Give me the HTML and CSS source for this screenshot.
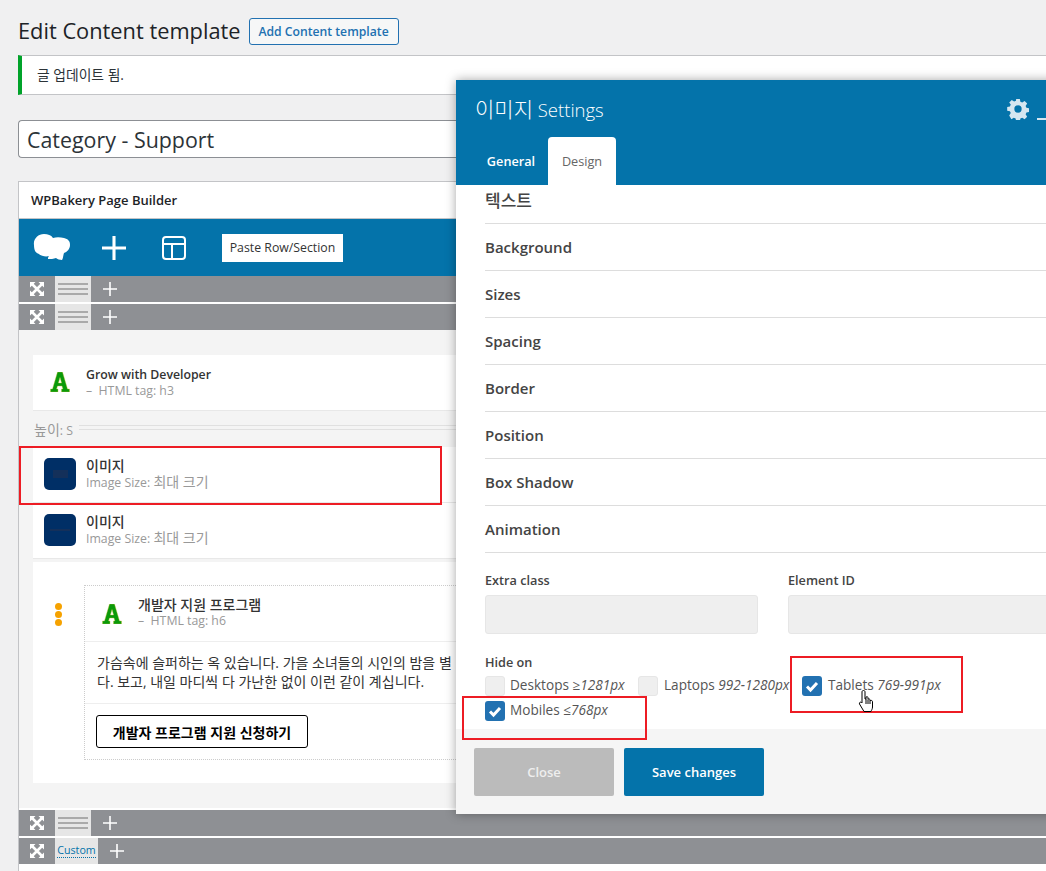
FILE: index.html
```html
<!DOCTYPE html>
<html lang="ko">
<head>
<meta charset="utf-8">
<title>Edit Content template</title>
<link rel="stylesheet" href="styles.css">
</head>
<body>
<svg class="defs" width="0" height="0">
  <symbol id="expand" viewBox="0 0 14 14">
    <path fill="#fff" d="M0 0h5.500L0 5.500zM14 0v5.500L8.500 0zM0 14V8.500L5.500 14zM14 14H8.500L14 8.500z"/>
    <path stroke="#fff" stroke-width="2.600" d="M2 2l10 10M12 2 2 12"/>
  </symbol>
  <symbol id="plus" viewBox="0 0 14 14">
    <path stroke="#fff" stroke-width="1.600" d="M7 0v14M0 7h14"/>
  </symbol>
  <symbol id="letter" viewBox="0 0 20 20">
    <path fill="#0a9a0a" stroke="#c9c23a" stroke-width=".4" d="M7.500 0h5l5 17h2v3h-8v-3h1.400l-.9-3H7.500l-.9 3H8v3H.5v-3h2zM10 5.500 8.400 11h3.200z"/>
  </symbol>
  <symbol id="check" viewBox="0 0 20 20">
    <path fill="none" stroke="#fff" stroke-width="3" d="M5 10.500 8.500 14 15 7"/>
  </symbol>
</svg>

<main class="page">
  <div class="heading">
    <h1 class="title">Edit Content template</h1>
    <a class="add-btn">Add Content template</a>
  </div>
  <div class="notice">글 업데이트 됨.</div>
  <div class="title-input">Category - Support</div>

  <section class="card">
    <h2 class="card-head">WPBakery Page Builder</h2>
    <div class="toolbar">
      <svg class="logo" width="38" height="28" viewBox="0 0 38 28"><path fill="#fff" d="M1 11C0 5 5 0 11 0c4 0 7 1 9 4 3-1 7-1 11 0 4 1 6 3 6 7 0 4-3 7-6 8-1 3-1 6-2 7-2 0-5-1-6-2-2 1-6 1-8 1 0-1 0-2 1-3-3 1-8 0-10-2-3-1-5-3-5-9z"/></svg>
      <svg class="tool-plus" width="24" height="24" viewBox="0 0 14 14"><path stroke="#fff" stroke-width="1.800" d="M7 0v14M0 7h14"/></svg>
      <svg class="tool-layout" width="24" height="24" viewBox="0 0 24 24"><path fill="none" stroke="#fff" stroke-width="2" d="M4 1h16a3 3 0 0 1 3 3v16a3 3 0 0 1-3 3H4a3 3 0 0 1-3-3V4a3 3 0 0 1 3-3zM1 8h22M10 8v15"/></svg>
      <span class="paste">Paste Row/Section</span>
    </div>
    <div class="row-bar">
      <span class="bar-expand"><svg width="14" height="14"><use href="#expand"/></svg></span>
      <span class="bar-handle"></span>
      <svg class="bar-plus" width="14" height="14"><use href="#plus"/></svg>
    </div>
    <div class="row-bar row-bar-gap">
      <span class="bar-expand"><svg width="14" height="14"><use href="#expand"/></svg></span>
      <span class="bar-handle"></span>
      <svg class="bar-plus" width="14" height="14"><use href="#plus"/></svg>
    </div>

    <div class="canvas">
      <div class="el el-head">
        <svg class="el-letter" width="20" height="20"><use href="#letter"/></svg>
        <div class="el-text">
          <strong class="el-name">Grow with Developer</strong>
          <span class="el-sub">– &nbsp;HTML tag: h3</span>
        </div>
      </div>
      <div class="spacer"><span><span class="ko">높이</span>: S</span><i class="spacer-line"></i></div>
      <div class="el el-img">
        <span class="thumb"><i class="thumb-mark"></i></span>
        <div class="el-text">
          <strong class="el-name ko-strong">이미지</strong>
          <span class="el-sub">Image Size: <span class="ko">최대 크기</span></span>
        </div>
      </div>
      <div class="el el-img">
        <span class="thumb"><i class="thumb-line"></i></span>
        <div class="el-text">
          <strong class="el-name ko-strong">이미지</strong>
          <span class="el-sub">Image Size: <span class="ko">최대 크기</span></span>
        </div>
      </div>
      <div class="cta">
        <div class="dots"><i></i><i></i><i></i></div>
        <div class="cta-box">
          <div class="cta-head">
            <svg class="el-letter-in" width="20" height="20"><use href="#letter"/></svg>
            <div class="el-text">
              <strong class="el-name ko-strong">개발자 지원 프로그램</strong>
              <span class="el-sub">– &nbsp;HTML tag: h6</span>
            </div>
          </div>
          <p class="cta-copy">가슴속에 슬퍼하는 옥 있습니다. 가을 소녀들의 시인의 밤을 별<br>다. 보고, 내일 마디씩 다 가난한 없이 이런 같이 계십니다.</p>
          <div class="cta-foot"><a class="cta-btn">개발자 프로그램 지원 신청하기</a></div>
        </div>
      </div>
    </div>

    <div class="row-bar row-bar-after">
      <span class="bar-expand"><svg width="14" height="14"><use href="#expand"/></svg></span>
      <span class="bar-handle"></span>
      <svg class="bar-plus" width="14" height="14"><use href="#plus"/></svg>
    </div>
    <div class="row-bar row-bar-gap">
      <span class="bar-expand"><svg width="14" height="14"><use href="#expand"/></svg></span>
      <span class="bar-custom"><a>Custom</a></span>
      <svg class="bar-plus bar-plus-custom" width="14" height="14"><use href="#plus"/></svg>
    </div>
  </section>
</main>

<aside class="modal">
  <header class="modal-head">
    <div class="modal-top">
      <span class="modal-title"><span class="modal-ko">이미지</span> Settings</span>
      <svg class="gear" width="22" height="22" viewBox="0 0 24 24"><path fill="#d5e6f0" fill-rule="evenodd" d="M10 1h4l.6 3 2 .9 2.600-1.700 2.800 2.800-1.700 2.600.9 2 3 .6v4l-3 .6-.9 2 1.700 2.600-2.800 2.800-2.600-1.700-2 .9-.6 3h-4l-.6-3-2-.9-2.600 1.700L2.400 19l1.700-2.600-.9-2-3-.6v-4l3-.6.9-2L2.400 5l2.800-2.800 2.600 1.700 2-.9zM12 8a4 4 0 1 0 0 8 4 4 0 0 0 0-8z"/></svg>
      <span class="minimize"></span>
    </div>
    <nav class="tabs">
      <span class="tab">General</span>
      <span class="tab tab-on">Design</span>
    </nav>
  </header>
  <div class="modal-body">
    <div class="acc acc-first">텍스트</div>
    <div class="acc">Background</div>
    <div class="acc">Sizes</div>
    <div class="acc">Spacing</div>
    <div class="acc">Border</div>
    <div class="acc">Position</div>
    <div class="acc">Box Shadow</div>
    <div class="acc">Animation</div>
    <div class="fields">
      <label class="field"><span class="field-label">Extra class</span><span class="field-input"></span></label>
      <label class="field"><span class="field-label">Element ID</span><span class="field-input"></span></label>
    </div>
    <div class="hide-label">Hide on</div>
    <div class="checks">
      <span class="chk chk-desktop"><i class="box"></i>Desktops ≥<em>1281px</em></span>
      <span class="chk chk-laptop"><i class="box"></i>Laptops <em>992-1280px</em></span>
      <span class="chk chk-tablet"><i class="box box-on"><svg width="20" height="20"><use href="#check"/></svg></i>Tablets <em>769-991px</em></span>
      <span class="chk chk-mobile"><i class="box box-on"><svg width="20" height="20"><use href="#check"/></svg></i>Mobiles ≤<em>768px</em></span>
    </div>
  </div>
  <footer class="modal-foot">
    <a class="btn btn-close">Close</a>
    <a class="btn btn-save">Save changes</a>
  </footer>
</aside>

<div class="mark mark-image"></div>
<div class="mark mark-tablet"></div>
<div class="mark mark-mobile"></div>
<svg class="cursor" width="18" height="24" viewBox="0 0 18 24"><path fill="#fff" stroke="#000" stroke-width="1" d="M5.500 1.500c1 0 1.500.6 1.500 1.500v7l1-.1V8c1.200-.6 2-.3 2 .8v1.400c1.100-.6 2-.3 2 .8v.7c1.200-.6 2.500-.3 2.500 1V18c0 2-1 3-1.500 4.500H6L1.500 15c-.5-1.300.8-2.500 2-1.500l.5.500V3c0-1 .5-1.500 1.500-1.500zM8 10v5M10 10.500V15M12 11.500V15"/></svg>
</body>
</html>
```
FILE: styles.css
```css
* { box-sizing: border-box; }
html, body { margin: 0; height: 871px; overflow: hidden; }
body {
  background: #f0f0f1;
  color: #2c3338;
  font-family: "Open Sans", "Noto Sans CJK KR", sans-serif;
  font-size: 13px;
  position: relative;
}
.defs { position: absolute; }
.page { padding: 18px 0 0 18px; }
.ko { font-size: 14px; }

.heading { display: flex; align-items: center; gap: 8px; height: 27px; }
.title { margin: 0 0 2px; font-size: 21.800px; font-weight: 400; color: #1d2327; }
.add-btn {
  height: 27px; width: 150px; display: flex; align-items: center; justify-content: center;
  border: 1px solid #2271b1; border-radius: 3px; background: #f6f7f7;
  color: #2271b1; font-size: 12.200px; font-weight: 600;
}
.notice {
  margin-top: 10px; height: 40px; padding: 0 0 3px 15px; display: flex; align-items: center;
  background: #fff; border: 1px solid #c3c4c7; border-left: 4px solid #00a32a; border-right: 0;
  font-size: 13.800px;
}
.title-input {
  margin-top: 25px; height: 38px; padding: 0 8px; display: flex; align-items: center;
  background: #fff; border: 1px solid #8c8f94; border-radius: 4px 0 0 4px; border-right: 0;
  font-size: 21.400px; color: #2c3338;
}

.card { margin-top: 23px; background: #fff; border: 1px solid #c3c4c7; border-right: 0; border-bottom: 0; height: 700px; }
.card-head {
  margin: 0; height: 37px; padding-left: 12px; display: flex; align-items: center;
  font-size: 13px; font-weight: 600; color: #1d2327; border-bottom: 1px solid #c3c4c7;
}
.toolbar { height: 57px; background: #0473aa; display: flex; align-items: center; }
.logo { margin-left: 14px; }
.tool-plus { margin-left: 31px; }
.tool-layout { margin-left: 36px; }
.paste {
  margin-left: 36px; height: 28px; width: 121px; display: flex; align-items: center; justify-content: center;
  background: #fff; color: #333; font-size: 12.300px;
}

.row-bar { height: 26px; background: #8e9094; display: flex; align-items: stretch; }
.row-bar-gap { margin-top: 2px; }
.row-bar-after { margin-top: 2px; }
.bar-expand { width: 36px; display: flex; align-items: center; justify-content: center; }
.bar-handle {
  width: 36px; background-color: #e6e6e6;
  background-image: linear-gradient(#aaa, #aaa), linear-gradient(#aaa, #aaa), linear-gradient(#aaa, #aaa);
  background-size: 30px 2px; background-repeat: no-repeat;
  background-position: center 7px, center 12px, center 17px;
}
.bar-plus { margin: 6px 0 0 12px; }
.bar-plus-custom { margin-left: 12px; }
.bar-custom { width: 43px; background: #e6e6e6; display: flex; align-items: center; justify-content: center; }
.bar-custom a { color: #0473aa; font-size: 10.700px; border-bottom: 1px dotted #0473aa; line-height: 13px; }

.canvas { background: #f4f4f4; height: 478px; padding: 25px 0 0 14px; }
.el { background: #fff; display: flex; border-bottom: 1px solid #e8e8e8; }
.el-head { height: 56px; padding: 12px 0 0 17px; }
.el-img { height: 56px; padding: 11px 0 0 11px; }
.el-letter { margin: 5px 16px 0 0; }
.el-text { display: flex; flex-direction: column; gap: 0; }
.el-name { font-size: 12.300px; font-weight: 600; line-height: 16px; color: #333; }
.ko-strong { font-size: 14px; font-weight: 500; }
.el-sub { font-size: 12.300px; line-height: 16px; color: #999; }
.spacer { height: 36px; display: flex; align-items: center; gap: 6px; color: #999; font-size: 12.300px; padding-left: 1px; }
.spacer-line { flex: 1; height: 5px; border-top: 1px solid #e0e0e0; border-bottom: 1px solid #e0e0e0; margin-top: -3px; }
.thumb { width: 32px; height: 32px; margin-right: 10px; border-radius: 5px; background: #002f66; display: flex; align-items: center; justify-content: center; }
.thumb-mark { width: 15px; height: 8px; background: #14305a; }
.thumb-line { width: 20px; height: 2px; background: #14305a; }
.cta { margin-top: 3px; height: 221px; background: #fff; padding: 23px 0 0 51px; display: flex; position: relative; }
.dots { position: absolute; left: 22px; top: 41px; display: flex; flex-direction: column; gap: 1px; }
.dots i { width: 7px; height: 7px; background: #f6a200; border-radius: 50%; }
.cta-box { flex: 1; height: 175px; border: 1px dotted #ccc; }
.cta-head { height: 56px; padding: 11px 0 0 17px; display: flex; border-bottom: 1px solid #eee; }
.el-letter-in { margin: 7px 16px 0 0; }
.cta-copy { margin: 0; height: 62px; padding: 11px 0 0 12px; font-size: 14px; line-height: 19px; color: #333; border-bottom: 1px solid #eee; white-space: nowrap; overflow: hidden; }
.cta-foot { padding: 11px 0 0 11px; }
.cta-btn {
  width: 212px; height: 33px; display: flex; align-items: center; justify-content: center;
  border: 1px solid #000; border-radius: 3px; font-size: 14px; font-weight: 700; color: #000;
}

.modal {
  position: absolute; left: 456px; top: 80px; width: 640px; height: 734px;
  background: #fff; box-shadow: 0 0 10px rgba(0,0,0,.35); display: flex; flex-direction: column;
}
.modal-head { height: 105px; background: #0473aa; display: flex; flex-direction: column; }
.modal-top { height: 57px; display: flex; align-items: center; padding: 0 0 2px 19px; position: relative; }
.modal-title { font-size: 18.500px; font-weight: 300; color: #fff; }
.modal-ko { font-size: 21px; }
.gear { position: absolute; left: 551px; top: 18px; }
.minimize { position: absolute; left: 581px; top: 38px; width: 10px; height: 2px; background: #d5e6f0; }
.tabs { display: flex; height: 48px; padding-left: 18px; }
.tab { width: 74px; display: flex; align-items: center; justify-content: center; color: #fff; font-size: 12.700px; font-weight: 600; }
.tab-on { width: 68px; background: #fff; color: #666; font-weight: 400; border-radius: 4px 4px 0 0; }
.modal-body { flex: 1; padding-left: 29px; overflow: hidden; }
.acc { height: 47px; display: flex; align-items: center; border-bottom: 1px solid #ddd; font-size: 15px; font-weight: 600; color: #444; }
.acc-first { height: 39px; padding-bottom: 9px; font-size: 17px; font-weight: 500; }
.fields { display: flex; gap: 30px; margin-top: 19px; }
.field { width: 273px; display: flex; flex-direction: column; gap: 6px; }
.field-label { font-size: 12.700px; font-weight: 600; color: #444; line-height: 17px; }
.field-input { height: 39px; background: #efefef; border: 1px solid #e6e6e6; border-radius: 3px; }
.hide-label { margin-top: 20px; font-size: 12.700px; font-weight: 600; color: #444; line-height: 17px; }
.checks { display: flex; flex-wrap: wrap; margin-top: 5px; row-gap: 5px; }
.chk { display: flex; align-items: flex-start; height: 20px; line-height: 18px; font-size: 13.600px; color: #555; white-space: pre; }
.chk em { font-style: italic; }
.chk-desktop { width: 153px; }
.chk-laptop { width: 164px; }
.chk-mobile { width: 100%; }
.box { width: 20px; height: 20px; border-radius: 3px; background: #efefef; border: 1px solid #e6e6e6; margin-right: 5px; display: block; flex: none; }
.chk-laptop .box, .chk-tablet .box { margin-right: 6px; }
.box-on { background: #2271b1; border: 0; }
.box-on svg { display: block; }
.modal-foot { height: 85px; background: #f5f5f5; padding: 19px 0 0 18px; display: flex; gap: 10px; }
.btn { width: 140px; height: 48px; border-radius: 2px; color: #fff; font-size: 13px; font-weight: 600; display: flex; align-items: center; justify-content: center; }
.btn-close { background: #bbb; color: #eee; }
.btn-save { background: #0473aa; }

.mark { position: absolute; border: 2px solid #ed1c24; }
.mark-image { left: 19px; top: 446px; width: 423px; height: 59px; }
.mark-tablet { left: 790px; top: 656px; width: 173px; height: 57px; }
.mark-mobile { left: 462px; top: 696px; width: 185px; height: 44px; }
.cursor { position: absolute; left: 858px; top: 689px; }
```
